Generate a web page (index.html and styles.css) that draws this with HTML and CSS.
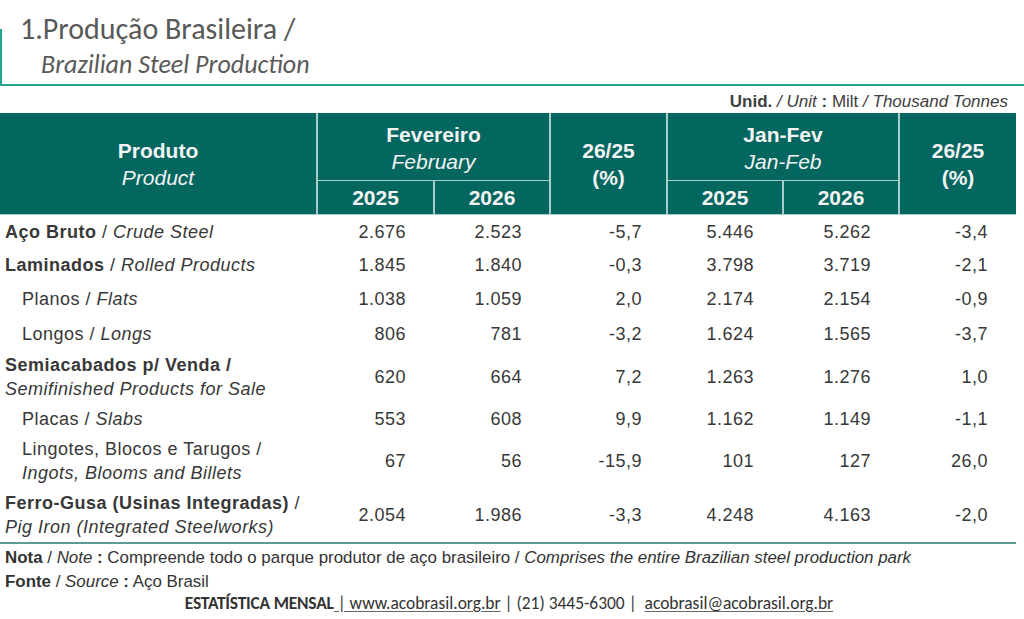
FILE: index.html
```html
<!DOCTYPE html>
<html lang="pt">
<head>
<meta charset="utf-8">
<title>Produção Brasileira</title>
<link rel="stylesheet" href="styles.css">
</head>
<body>
<header class="head">
  <h1 class="title">1.Produção Brasileira /</h1>
  <h2 class="subtitle">Brazilian Steel Production</h2>
</header>
<div class="unit"><b>Unid.</b> <i>/ Unit</i> <b>:</b> Milt <i>/ Thousand Tonnes</i></div>
<table class="data">
  <colgroup>
    <col class="c-prod"><col class="c-a"><col class="c-b"><col class="c-a"><col class="c-b"><col class="c-b"><col class="c-a">
  </colgroup>
  <thead>
    <tr class="h1">
      <th rowspan="2"><b>Produto</b><i>Product</i></th>
      <th colspan="2" class="grp"><b>Fevereiro</b><i>February</i></th>
      <th rowspan="2"><b>26/25</b><b>(%)</b></th>
      <th colspan="2" class="grp"><b>Jan-Fev</b><i>Jan-Feb</i></th>
      <th rowspan="2" class="last"><b>26/25</b><b>(%)</b></th>
    </tr>
    <tr class="h2">
      <th>2025</th><th>2026</th><th>2025</th><th>2026</th>
    </tr>
  </thead>
  <tbody>
    <tr class="r1"><td class="lbl"><b>Aço Bruto</b> / <i>Crude Steel</i></td><td>2.676</td><td>2.523</td><td class="p">-5,7</td><td>5.446</td><td>5.262</td><td class="p">-3,4</td></tr>
    <tr class="r2"><td class="lbl"><b>Laminados</b> / <i>Rolled Products</i></td><td>1.845</td><td>1.840</td><td class="p">-0,3</td><td>3.798</td><td>3.719</td><td class="p">-2,1</td></tr>
    <tr class="r2"><td class="lbl sub">Planos / <i>Flats</i></td><td>1.038</td><td>1.059</td><td class="p">2,0</td><td>2.174</td><td>2.154</td><td class="p">-0,9</td></tr>
    <tr class="r3"><td class="lbl sub">Longos / <i>Longs</i></td><td>806</td><td>781</td><td class="p">-3,2</td><td>1.624</td><td>1.565</td><td class="p">-3,7</td></tr>
    <tr class="r4"><td class="lbl"><b>Semiacabados p/ Venda /</b><br><i>Semifinished Products for Sale</i></td><td>620</td><td>664</td><td class="p">7,2</td><td>1.263</td><td>1.276</td><td class="p">1,0</td></tr>
    <tr class="r5"><td class="lbl sub">Placas / <i>Slabs</i></td><td>553</td><td>608</td><td class="p">9,9</td><td>1.162</td><td>1.149</td><td class="p">-1,1</td></tr>
    <tr class="r6"><td class="lbl sub">Lingotes, Blocos e Tarugos /<br><i>Ingots, Blooms and Billets</i></td><td>67</td><td>56</td><td class="p">-15,9</td><td>101</td><td>127</td><td class="p">26,0</td></tr>
    <tr class="r7"><td class="lbl"><b>Ferro-Gusa (Usinas Integradas)</b> /<br><i>Pig Iron (Integrated Steelworks)</i></td><td>2.054</td><td>1.986</td><td class="p">-3,3</td><td>4.248</td><td>4.163</td><td class="p">-2,0</td></tr>
  </tbody>
</table>
<footer class="foot">
  <p class="note"><b>Nota</b> / <i>Note</i> <b>:</b> Compreende todo o parque produtor de aço brasileiro / <i>Comprises the entire Brazilian steel production park</i></p>
  <p class="note"><b>Fonte</b> / <i>Source</i> <b>:</b> Aço Brasil</p>
  <p class="contact"><b>ESTATÍSTICA MENSAL</b><u> | www.acobrasil.org.br</u> | (21) 3445-6300 |&nbsp; <u>acobrasil@acobrasil.org.br</u></p>
</footer>
</body>
</html>
```
FILE: styles.css
```css
html, body {
  margin: 0;
  padding: 0;
  background: #ffffff;
  width: 1024px;
  height: 619px;
  overflow: hidden;
}

/* ---------- title block ---------- */
.head {
  position: relative;
  height: 86px;
  box-sizing: border-box;
  margin: 0;
  padding-top: 14px;
  border-bottom: 2px solid #24a38e;
}
.head::before {
  content: "";
  position: absolute;
  left: 0;
  top: 29px;
  bottom: 0;
  width: 2px;
  background: #24a38e;
}
.title {
  margin: 0 0 0 20px;
  font-family: Carlito, Lato, sans-serif;
  font-weight: 400;
  font-size: 30px;
  line-height: 30px;
  color: #595959;
}
.subtitle {
  margin: 7px 0 0 41px;
  font-family: Carlito, Lato, sans-serif;
  font-weight: 400;
  font-style: italic;
  font-size: 26px;
  line-height: 26px;
  color: #595959;
}

/* ---------- unit line ---------- */
.unit {
  width: 1008px;
  height: 20px;
  margin: 6px 0 1px 0;
  text-align: right;
  font-family: "Liberation Sans", Arial, sans-serif;
  font-size: 17px;
  line-height: 20px;
  color: #404040;
}

/* ---------- table ---------- */
.data {
  border-collapse: collapse;
  table-layout: fixed;
  width: 1016px;
  font-family: "Liberation Sans", Arial, sans-serif;
  color: #383838;
}
.c-prod { width: 317px; }
.c-a { width: 117px; }
.c-b { width: 116px; }

.data th {
  padding: 0;
  background: #03665f;
  color: #f3f3f3;
  border-left: 2px solid #a7cdc8;
  border-bottom: 1px solid #a7cdc8;
  font-size: 21px;
  line-height: 27px;
  font-weight: 700;
  text-align: center;
  vertical-align: middle;
}
.data tr.h1 th:first-child { border-left: none; }
.data tr.h2 th:first-child { border-left: 2px solid #a7cdc8; }
.data th b, .data th i { display: block; }
.data th i { font-weight: 400; }
.data tr.h1 th { height: 67px; }
.data tr.h1 th.grp { padding-top: 2px; height: 65px; }
.data tr.h2 th { height: 33px; }

.data td {
  padding: 0 28px 0 0;
  text-align: right;
  vertical-align: middle;
  font-size: 18px;
  letter-spacing: 0.5px;
  line-height: 24px;
  white-space: nowrap;
}
.data td.p { padding-right: 25px; }
.data td:nth-child(5) { padding-right: 29px; }
.data td:last-child { padding-right: 28px; }

.data td.lbl {
  text-align: left;
  padding: 0 0 0 5px;
}
.data td.sub { padding-left: 22px; }

.data tr.r1 td { height: 33px; }
.data tr.r2 td { height: 34px; }
.data tr.r3 td { height: 35px; }
.data tr.r4 td { height: 52px; }
.data tr.r5 td { height: 32px; }
.data tr.r6 td { height: 52px; }
.data tr.r7 td { height: 55px; border-bottom: 2px solid #5e9d96; }

/* ---------- footer ---------- */
.foot {
  padding-top: 2px;
  color: #333333;
}
.note {
  margin: 0;
  padding-left: 5px;
  font-family: "Liberation Sans", Arial, sans-serif;
  font-size: 16.9px;
  line-height: 24px;
}
.contact {
  width: 1018px;
  margin: -1px 0 0 0;
  text-align: center;
  font-family: Carlito, Lato, sans-serif;
  font-size: 17.45px;
  line-height: 20px;
  color: #333333;
}
.contact b { letter-spacing: -0.2px; }
.contact u { text-decoration-color: #666666; text-underline-offset: 2px; }
```
